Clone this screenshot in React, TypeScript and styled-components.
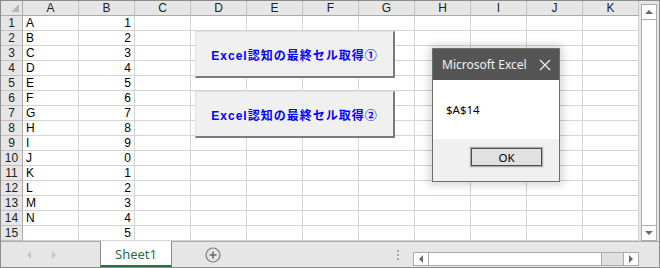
import React from "react";
import styled, { createGlobalStyle } from "styled-components";

const GlobalStyle = createGlobalStyle`
  body {
    margin: 0;
    background: #ffffff;
    font-family: "Liberation Sans", Arial, sans-serif;
  }
`;

const COLS = ["A", "B", "C", "D", "E", "F", "G", "H", "I", "J", "K"];
const LETTERS = ["A", "B", "C", "D", "E", "F", "G", "H", "I", "J", "K", "L", "M", "N", ""];
const NUMBERS = [1, 2, 3, 4, 5, 6, 7, 8, 9, 0, 1, 2, 3, 4, 5];

const Frame = styled.div`
  width: 658px;
  height: 266px;
  border: 1px solid #8c8c8c;
  display: flex;
  flex-direction: column;
  position: relative;
  overflow: hidden;
  background: #e6e6e6;
`;

const SheetArea = styled.div`
  display: flex;
  height: 240px;
`;

const Grid = styled.div`
  display: grid;
  grid-template-columns: 22px repeat(11, 56px);
  grid-template-rows: 15px repeat(15, 15px);
  width: 638px;
  background: #ffffff;
  position: relative;
`;

const Corner = styled.div`
  background: #e6e6e6;
  border-right: 1px solid #ababab;
  border-bottom: 1px solid #ababab;
  position: relative;
  &::after {
    content: "";
    position: absolute;
    right: 3px;
    bottom: 3px;
    border-left: 8px solid transparent;
    border-bottom: 8px solid #b8b8b8;
  }
`;

const ColHead = styled.div`
  background: #e6e6e6;
  border-right: 1px solid #c2c2c2;
  border-bottom: 1px solid #ababab;
  font-size: 12px;
  line-height: 14px;
  text-align: center;
  color: #222;
`;

const RowHead = styled.div`
  background: #e6e6e6;
  border-right: 1px solid #ababab;
  border-bottom: 1px solid #c2c2c2;
  font-size: 12px;
  line-height: 14px;
  text-align: center;
  color: #222;
`;

const Cell = styled.div<{ $right?: boolean }>`
  border-right: 1px solid #d4d4d4;
  border-bottom: 1px solid #d4d4d4;
  font-size: 12px;
  line-height: 14px;
  padding: 0 3px;
  text-align: ${({ $right }) => ($right ? "right" : "left")};
  color: #000;
  overflow: hidden;
  white-space: nowrap;
`;

const MacroButton = styled.div<{ $top: number }>`
  position: absolute;
  left: 194px;
  top: ${({ $top }) => $top}px;
  width: 197px;
  height: 44px;
  background: #f0f0f0;
  border: 1px solid #e0e0e0;
  border-right: 2px solid #7a7a7a;
  border-bottom: 2px solid #7a7a7a;
  display: flex;
  align-items: center;
  justify-content: center;
  color: #0000ff;
  font-weight: bold;
  font-size: 12px;
  font-family: "Liberation Sans", "Noto Sans CJK JP", sans-serif;
  letter-spacing: 1px;
`;

const VScroll = styled.div`
  width: 20px;
  display: flex;
  flex-direction: column;
  align-items: center;
  padding-top: 3px;
`;

const VTrack = styled.div`
  width: 14px;
  flex: 1;
  background: #ffffff;
  border: 1px solid #ababab;
  display: flex;
  flex-direction: column;
  justify-content: space-between;
`;

const ArrowBox = styled.div`
  height: 14px;
  display: flex;
  align-items: center;
  justify-content: center;
  background: #ffffff;
`;

const VArrowBox = styled(ArrowBox)<{ $top?: boolean }>`
  border-bottom: ${({ $top }) => ($top ? "1px solid #ababab" : "none")};
  border-top: ${({ $top }) => ($top ? "none" : "1px solid #ababab")};
`;

const Tri = styled.div<{ $dir: "up" | "down" | "left" | "right"; $color?: string }>`
  width: 0;
  height: 0;
  ${({ $dir, $color = "#6a6a6a" }) =>
    $dir === "up"
      ? `border-left:4px solid transparent;border-right:4px solid transparent;border-bottom:4px solid ${$color};`
      : $dir === "down"
      ? `border-left:4px solid transparent;border-right:4px solid transparent;border-top:4px solid ${$color};`
      : $dir === "left"
      ? `border-top:4px solid transparent;border-bottom:4px solid transparent;border-right:4px solid ${$color};`
      : `border-top:4px solid transparent;border-bottom:4px solid transparent;border-left:4px solid ${$color};`}
`;

const TabBar = styled.div`
  flex: 1;
  display: flex;
  align-items: stretch;
  border-top: 1px solid #ababab;
  background: #e6e6e6;
`;

const NavArea = styled.div`
  width: 99px;
  display: flex;
  align-items: center;
  gap: 21px;
  padding-left: 26px;
  box-sizing: border-box;
`;

const SheetTab = styled.div`
  width: 72px;
  margin-top: -1px;
  background: #ffffff;
  border-left: 1px solid #8c8c8c;
  border-right: 1px solid #8c8c8c;
  border-bottom: 2px solid #217346;
  box-sizing: border-box;
  display: flex;
  align-items: center;
  justify-content: center;
  color: #217346;
  font-family: "Noto Sans", "Liberation Sans", sans-serif;
  font-size: 13px;
  padding-top: 2px;
`;

const AddArea = styled.div`
  width: 82px;
  display: flex;
  align-items: center;
  justify-content: center;
`;

const Spacer = styled.div`
  width: 159px;
  display: flex;
  align-items: center;
  justify-content: flex-end;
  padding-right: 14px;
  box-sizing: border-box;
`;

const Dots = styled.div`
  display: flex;
  flex-direction: column;
  gap: 2px;
  & > span {
    width: 2px;
    height: 2px;
    background: #a8a8a8;
  }
`;

const HScroll = styled.div`
  width: 224px;
  height: 12px;
  margin-top: 10px;
  display: flex;
  border: 1px solid #ababab;
  background: #ffffff;
`;

const HArrow = styled.div<{ $left?: boolean }>`
  width: 14px;
  display: flex;
  align-items: center;
  justify-content: center;
  border-right: ${({ $left }) => ($left ? "1px solid #ababab" : "none")};
  border-left: ${({ $left }) => ($left ? "none" : "1px solid #ababab")};
`;

const HThumb = styled.div`
  flex: 1;
  background: #ffffff;
`;

const HRest = styled.div`
  width: 21px;
  background: #e0e0e0;
  border-left: 1px solid #ababab;
`;

const Dialog = styled.div`
  position: absolute;
  left: 431px;
  top: 47px;
  width: 126px;
  height: 132px;
  border: 1px solid #6e6e6e;
  box-shadow: 0 0 8px 3px rgba(0, 0, 0, 0.16);
  display: flex;
  flex-direction: column;
  font-family: "Noto Sans", "Open Sans", sans-serif;
  background: #f0f0f0;
`;

const DialogTitle = styled.div`
  height: 31px;
  background: #555555;
  color: #f2f2f2;
  display: flex;
  align-items: center;
  justify-content: space-between;
  padding: 0 8px 0 9px;
  font-size: 12px;
`;

const DialogBody = styled.div`
  height: 59px;
  background: #ffffff;
  display: flex;
  align-items: center;
  padding-left: 13px;
  font-size: 11.5px;
  color: #000;
`;

const DialogFooter = styled.div`
  flex: 1;
  display: flex;
  justify-content: flex-end;
  padding: 8px 16px 0 0;
`;

const OkButton = styled.div`
  width: 71px;
  height: 18px;
  border: 1px solid #adadad;
  box-shadow: inset 0 0 0 1px #4d4d4d;
  outline: 1px solid #e1e1e1;
  background: #e1e1e1;
  display: flex;
  align-items: center;
  justify-content: center;
  font-size: 11.5px;
  color: #000;
`;

export default function App() {
  return (
    <>
      <GlobalStyle />
      <Frame>
        <SheetArea>
          <Grid>
            <Corner />
            {COLS.map((c) => (
              <ColHead key={c}>{c}</ColHead>
            ))}
            {NUMBERS.map((n, i) => (
              <React.Fragment key={i}>
                <RowHead>{i + 1}</RowHead>
                <Cell>{LETTERS[i]}</Cell>
                <Cell $right>{n}</Cell>
                {COLS.slice(2).map((c) => (
                  <Cell key={c} />
                ))}
              </React.Fragment>
            ))}
            <MacroButton $top={30}>Excel認知の最終セル取得①</MacroButton>
            <MacroButton $top={90}>Excel認知の最終セル取得②</MacroButton>
          </Grid>
          <VScroll>
            <VTrack>
              <VArrowBox $top>
                <Tri $dir="up" />
              </VArrowBox>
              <VArrowBox>
                <Tri $dir="down" />
              </VArrowBox>
            </VTrack>
          </VScroll>
        </SheetArea>
        <TabBar>
          <NavArea>
            <Tri $dir="left" $color="#c6c6c6" />
            <Tri $dir="right" $color="#c6c6c6" />
          </NavArea>
          <SheetTab>Sheet1</SheetTab>
          <AddArea>
            <svg width="16" height="16" viewBox="0 0 16 16">
              <circle cx="8" cy="8" r="7" fill="none" stroke="#7a7a7a" strokeWidth="1.2" />
              <path d="M8 4.5v7M4.5 8h7" stroke="#6a6a6a" strokeWidth="1.6" />
            </svg>
          </AddArea>
          <Spacer>
            <Dots>
              <span />
              <span />
              <span />
            </Dots>
          </Spacer>
          <HScroll>
            <HArrow $left>
              <Tri $dir="left" />
            </HArrow>
            <HThumb />
            <HRest />
            <HArrow>
              <Tri $dir="right" />
            </HArrow>
          </HScroll>
        </TabBar>
        <Dialog>
          <DialogTitle>
            <span>Microsoft Excel</span>
            <svg width="12" height="12" viewBox="0 0 12 12">
              <path d="M1 1l10 10M11 1L1 11" stroke="#f2f2f2" strokeWidth="1.2" />
            </svg>
          </DialogTitle>
          <DialogBody>$A$14</DialogBody>
          <DialogFooter>
            <OkButton>OK</OkButton>
          </DialogFooter>
        </Dialog>
      </Frame>
    </>
  );
}
